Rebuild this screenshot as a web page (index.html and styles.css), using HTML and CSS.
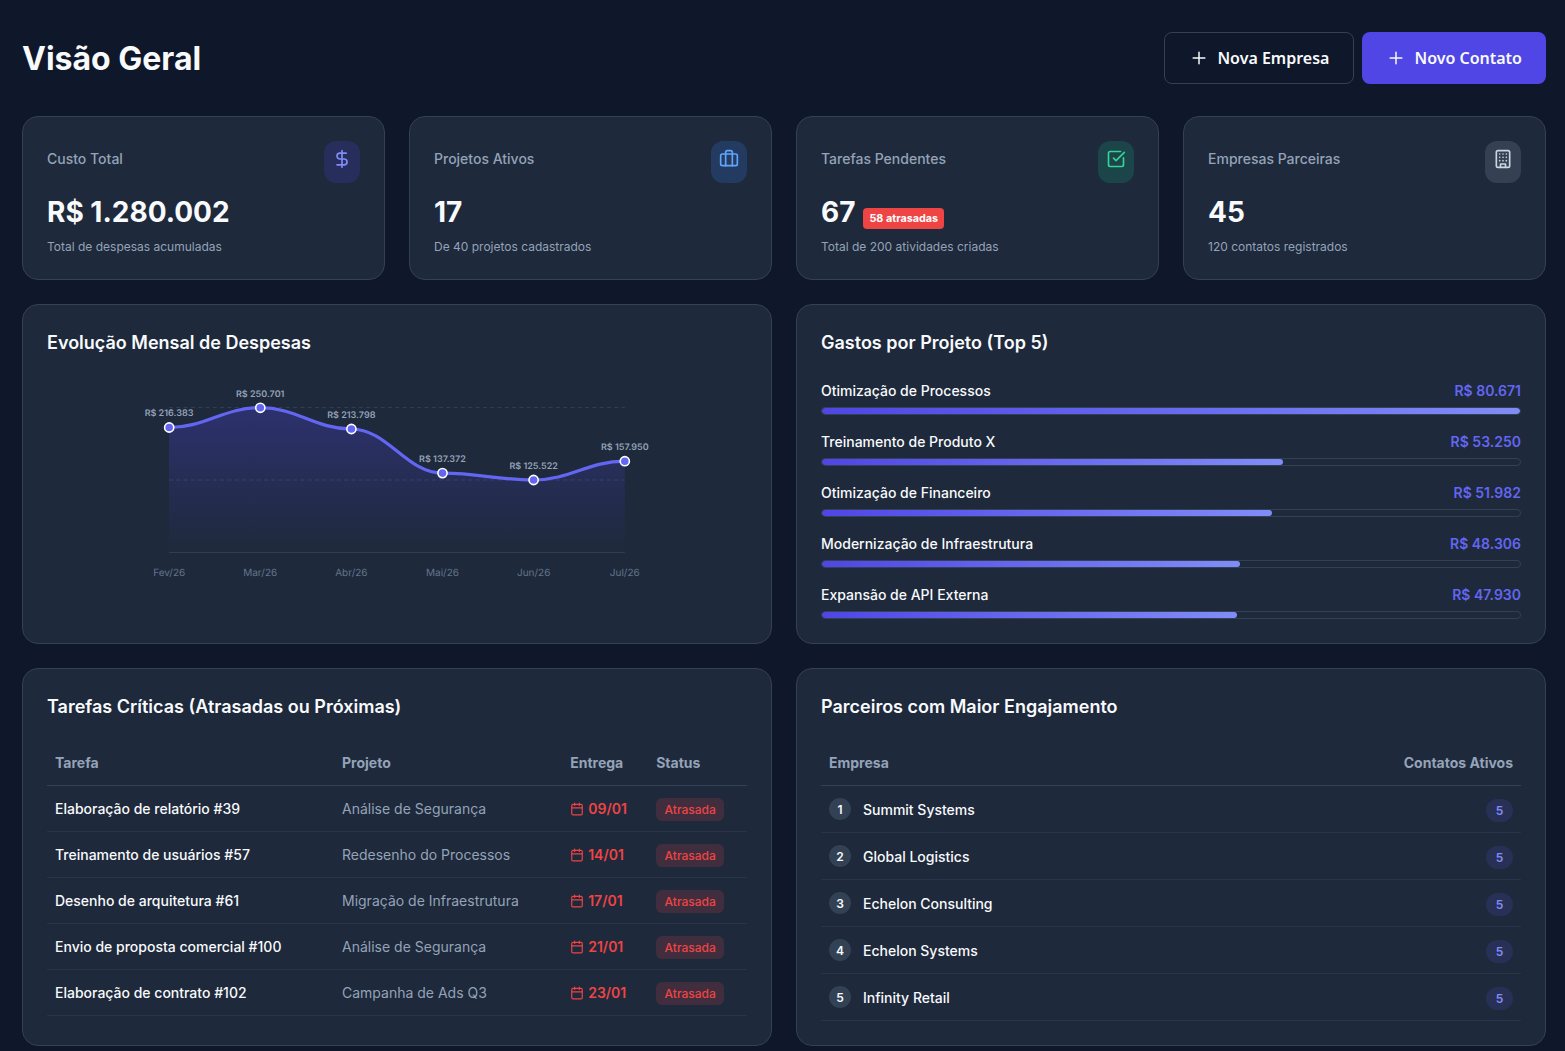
FILE: index.html
```html
<!DOCTYPE html>
<html lang="pt-BR">
<head>
<meta charset="utf-8">
<title>Visão Geral</title>
<link rel="stylesheet" href="styles.css">
</head>
<body>
<svg class="sprite" width="0" height="0">
  <symbol id="plus" viewBox="0 0 24 24"><path d="M5 12h14M12 5v14"/></symbol>
  <symbol id="calendar" viewBox="0 0 24 24"><path d="M8 2v4M16 2v4M3 10h18"/><rect x="3" y="4" width="18" height="18" rx="2"/></symbol>
</svg>
<main class="page">
  <header class="header">
    <h1>Visão Geral</h1>
    <div class="actions">
      <button class="btn btn-outline"><svg class="icon"><use href="#plus"/></svg>Nova Empresa</button>
      <button class="btn btn-primary"><svg class="icon"><use href="#plus"/></svg>Novo Contato</button>
    </div>
  </header>

  <section class="stats">
    <article class="card stat">
      <div class="stat-head"><span class="stat-label">Custo Total</span>
        <span class="stat-icon indigo"><svg class="icon" viewBox="0 0 24 24"><path d="M12 2v20M17 5H9.5a3.5 3.5 0 0 0 0 7h5a3.5 3.5 0 0 1 0 7H6"/></svg></span></div>
      <div class="stat-value">R$ 1.280.002</div>
      <p class="stat-note">Total de despesas acumuladas</p>
    </article>
    <article class="card stat">
      <div class="stat-head"><span class="stat-label">Projetos Ativos</span>
        <span class="stat-icon blue"><svg class="icon" viewBox="0 0 24 24"><path d="M16 20V4a2 2 0 0 0-2-2h-4a2 2 0 0 0-2 2v16"/><rect x="2" y="6" width="20" height="14" rx="2"/></svg></span></div>
      <div class="stat-value">17</div>
      <p class="stat-note">De 40 projetos cadastrados</p>
    </article>
    <article class="card stat">
      <div class="stat-head"><span class="stat-label">Tarefas Pendentes</span>
        <span class="stat-icon green"><svg class="icon" viewBox="0 0 24 24"><path d="M21 10.5V19a2 2 0 0 1-2 2H5a2 2 0 0 1-2-2V5a2 2 0 0 1 2-2h12.5"/><path d="m9 11 3 3L22 4"/></svg></span></div>
      <div class="stat-value">67<span class="late">58 atrasadas</span></div>
      <p class="stat-note">Total de 200 atividades criadas</p>
    </article>
    <article class="card stat">
      <div class="stat-head"><span class="stat-label">Empresas Parceiras</span>
        <span class="stat-icon slate"><svg class="icon" viewBox="0 0 24 24"><rect x="4" y="2" width="16" height="20" rx="2"/><path d="M9 22v-4h6v4M8 6h.01M16 6h.01M12 6h.01M12 10h.01M12 14h.01M16 10h.01M16 14h.01M8 10h.01M8 14h.01"/></svg></span></div>
      <div class="stat-value">45</div>
      <p class="stat-note">120 contatos registrados</p>
    </article>
  </section>

  <section class="panels">
    <article class="card panel">
      <h2>Evolução Mensal de Despesas</h2>
      <svg class="chart" viewBox="0 0 700 239">
        <defs><linearGradient id="area" x1="0" y1="0" x2="0" y2="1"><stop offset="0" stop-color="#4f46e5" stop-opacity=".3"/><stop offset="1" stop-color="#4f46e5" stop-opacity="0"/></linearGradient></defs>
        <path class="grid-line dashed" d="M122 27.6H577.8M122 100H577.8"/>
        <path class="grid-line" d="M122 172.4H577.8"/>
        <path fill="url(#area)" d="M122 47.5C158.5 47.5 176.7 27.6 213.2 27.6S267.8 49 304.3 49S359 93.1 395.5 93.1S450.2 100 486.7 100S541.3 81.2 577.8 81.2V172.4H122Z"/>
        <path class="line" d="M122 47.5C158.5 47.5 176.7 27.6 213.2 27.6S267.8 49 304.3 49S359 93.1 395.5 93.1S450.2 100 486.7 100S541.3 81.2 577.8 81.2"/>
        <g class="dots"><circle cx="122.2" cy="47.5" r="4.6"/><circle cx="213.3" cy="27.8" r="4.6"/><circle cx="304.4" cy="49" r="4.6"/><circle cx="395.5" cy="93.1" r="4.6"/><circle cx="486.6" cy="100" r="4.6"/><circle cx="577.8" cy="81.2" r="4.6"/></g>
        <g class="values"><text x="122" y="36">R$ 216.383</text><text x="213.2" y="16.8">R$ 250.701</text><text x="304.3" y="38">R$ 213.798</text><text x="395.5" y="82">R$ 137.372</text><text x="486.7" y="89">R$ 125.522</text><text x="577.8" y="70">R$ 157.950</text></g>
        <g class="months"><text x="122.2" y="196">Fev/26</text><text x="213.2" y="196">Mar/26</text><text x="304.4" y="196">Abr/26</text><text x="395.5" y="196">Mai/26</text><text x="486.7" y="196">Jun/26</text><text x="577.8" y="196">Jul/26</text></g>
      </svg>
    </article>
    <article class="card panel">
      <h2>Gastos por Projeto (Top 5)</h2>
      <div class="bars">
        <div class="bar-item"><div class="bar-text"><span>Otimização de Processos</span><strong>R$ 80.671</strong></div><div class="track"><div class="fill" style="width:100%"></div></div></div>
        <div class="bar-item"><div class="bar-text"><span>Treinamento de Produto X</span><strong>R$ 53.250</strong></div><div class="track"><div class="fill" style="width:66.01%"></div></div></div>
        <div class="bar-item"><div class="bar-text"><span>Otimização de Financeiro</span><strong>R$ 51.982</strong></div><div class="track"><div class="fill" style="width:64.44%"></div></div></div>
        <div class="bar-item"><div class="bar-text"><span>Modernização de Infraestrutura</span><strong>R$ 48.306</strong></div><div class="track"><div class="fill" style="width:59.88%"></div></div></div>
        <div class="bar-item"><div class="bar-text"><span>Expansão de API Externa</span><strong>R$ 47.930</strong></div><div class="track"><div class="fill" style="width:59.41%"></div></div></div>
      </div>
    </article>
    <article class="card panel">
      <h2>Tarefas Críticas (Atrasadas ou Próximas)</h2>
      <table class="tasks">
        <colgroup><col class="c-task"><col class="c-project"><col class="c-date"><col></colgroup>
        <thead><tr><th>Tarefa</th><th>Projeto</th><th>Entrega</th><th>Status</th></tr></thead>
        <tbody>
          <tr><td>Elaboração de relatório #39</td><td class="muted">Análise de Segurança</td><td><span class="date"><svg class="icon"><use href="#calendar"/></svg>09/01</span></td><td><span class="tag">Atrasada</span></td></tr>
          <tr><td>Treinamento de usuários #57</td><td class="muted">Redesenho do Processos</td><td><span class="date"><svg class="icon"><use href="#calendar"/></svg>14/01</span></td><td><span class="tag">Atrasada</span></td></tr>
          <tr><td>Desenho de arquitetura #61</td><td class="muted">Migração de Infraestrutura</td><td><span class="date"><svg class="icon"><use href="#calendar"/></svg>17/01</span></td><td><span class="tag">Atrasada</span></td></tr>
          <tr><td>Envio de proposta comercial #100</td><td class="muted">Análise de Segurança</td><td><span class="date"><svg class="icon"><use href="#calendar"/></svg>21/01</span></td><td><span class="tag">Atrasada</span></td></tr>
          <tr><td>Elaboração de contrato #102</td><td class="muted">Campanha de Ads Q3</td><td><span class="date"><svg class="icon"><use href="#calendar"/></svg>23/01</span></td><td><span class="tag">Atrasada</span></td></tr>
        </tbody>
      </table>
    </article>
    <article class="card panel">
      <h2>Parceiros com Maior Engajamento</h2>
      <table class="partners">
        <thead><tr><th>Empresa</th><th class="right">Contatos Ativos</th></tr></thead>
        <tbody>
          <tr><td><div class="company"><span class="rank">1</span><span class="name">Summit Systems</span></div></td><td class="right"><span class="count">5</span></td></tr>
          <tr><td><div class="company"><span class="rank">2</span><span class="name">Global Logistics</span></div></td><td class="right"><span class="count">5</span></td></tr>
          <tr><td><div class="company"><span class="rank">3</span><span class="name">Echelon Consulting</span></div></td><td class="right"><span class="count">5</span></td></tr>
          <tr><td><div class="company"><span class="rank">4</span><span class="name">Echelon Systems</span></div></td><td class="right"><span class="count">5</span></td></tr>
          <tr><td><div class="company"><span class="rank">5</span><span class="name">Infinity Retail</span></div></td><td class="right"><span class="count">5</span></td></tr>
        </tbody>
      </table>
    </article>
  </section>
</main>
</body>
</html>
```
FILE: styles.css
```css
* { box-sizing: border-box; }
body { margin: 0; background: #0f172a; color: #f8fafc; font-family: Inter, sans-serif; font-size: 14px; line-height: 21px; overflow: hidden; }
h1, h2, p { margin: 0; }
.sprite { position: absolute; }
.page { padding: 32px 19px 5px 22px; }
.icon { width: 20px; height: 20px; fill: none; stroke: currentColor; stroke-width: 2; stroke-linecap: round; stroke-linejoin: round; flex: none; }

.header { display: flex; justify-content: space-between; align-items: center; height: 52px; margin-bottom: 32px; }
h1 { font-size: 32px; line-height: 48px; font-weight: 700; padding-top: 2px; }
.actions { display: flex; gap: 8px; }
.btn { display: flex; align-items: center; gap: 8px; height: 52px; padding: 0 24px; border: 1px solid #334155; border-radius: 8px; background: transparent; color: #f8fafc; font: 600 16px/24px "Noto Sans", sans-serif; }
.btn .icon { stroke-width: 1.8; }
.btn-primary { background: #4f46e5; border: 0; }

.card { background: #1e293b; border: 1px solid #334155; border-radius: 16px; padding: 24px; }
.stats { display: grid; grid-template-columns: repeat(4, 1fr); gap: 24px; margin-bottom: 24px; }
.stat { height: 164px; }
.stat-head { display: flex; justify-content: space-between; align-items: flex-start; height: 42px; }
.stat-label { color: #94a3b8; font-weight: 500; padding-top: 7px; }
.stat-icon { width: 36px; height: 42px; padding: 8px; border-radius: 12px; }
.stat-icon .icon { display: block; }
.indigo { background: #272e5c; color: #818cf8; }
.blue { background: #243b61; color: #60a5fa; }
.green { background: #1b4549; color: #34d399; }
.slate { background: #354152; color: #cbd5e1; }
.stat-value { font-size: 28px; font-weight: 700; line-height: 42px; margin-top: 8px; height: 42px; }
.late { display: inline-block; margin-left: 8px; padding: 2px 6px; border-radius: 4px; background: #ef4444; color: #fff; font-size: 10.8px; line-height: 17px; font-weight: 700; }
.stat-note { color: #94a3b8; font-size: 12px; line-height: 18px; margin-top: 5px; }

.panels { display: grid; grid-template-columns: repeat(2, 1fr); grid-template-rows: 340px 378px; gap: 24px; }
h2 { font-size: 18px; line-height: 27px; font-weight: 600; margin-bottom: 24px; }
.chart { display: block; width: 700px; height: 239px; }
.grid-line { stroke: #334155; fill: none; stroke-width: 1; }
.dashed { stroke-dasharray: 4 3.3; }
.line { fill: none; stroke: #6366f1; stroke-width: 3.2; stroke-linecap: round; }
.dots { fill: #6366f1; stroke: #fff; stroke-width: 1.6; }
.values { fill: #94a3b8; font-size: 9px; font-weight: 600; text-anchor: middle; text-rendering: geometricPrecision; }
.months { fill: #64748b; font-size: 10px; text-anchor: middle; text-rendering: geometricPrecision; }

.bars { display: grid; gap: 16px; }
.bar-item { display: grid; gap: 6px; }
.bar-text { display: flex; justify-content: space-between; font-weight: 500; }
.bar-text strong { color: #6366f1; font-weight: 600; }
.track { height: 8px; border: 1px solid #334155; border-radius: 4px; overflow: hidden; }
.fill { height: 100%; border-radius: 4px; background: linear-gradient(90deg, #4f46e5, #818cf8); }

table { width: 100%; border-collapse: separate; border-spacing: 0; table-layout: fixed; }
th, td { text-align: left; padding: 0 8px; vertical-align: middle; }
th { height: 42px; padding-bottom: 4px; color: #94a3b8; font-weight: 700; border-bottom: 1px solid #334155; }
td { height: 46px; font-weight: 500; border-bottom: 1px solid #283548; }
.c-task { width: 287px; }
.c-project { width: 228.2px; }
.c-date { width: 86px; }
.muted { color: #94a3b8; font-weight: 400; }
.date { display: flex; align-items: center; gap: 4px; color: #ef4444; font-weight: 600; }
.date .icon { width: 14px; height: 14px; }
.tag { display: block; width: 68px; height: 23px; border-radius: 6px; background: #402e3e; color: #ef4444; font-size: 12px; line-height: 23px; font-weight: 500; text-align: center; margin-top: 1px; }
.right { text-align: right; }
.partners td { height: 47px; }
.company { display: flex; align-items: center; gap: 12px; }
.rank { width: 22px; height: 22px; border-radius: 50%; background: #334155; font-size: 12px; line-height: 23px; font-weight: 600; text-align: center; }
.name { padding-top: 1px; }
.count { display: inline-block; width: 27px; height: 23px; border-radius: 12px; background: #293056; color: #818cf8; font-size: 12px; line-height: 23px; font-weight: 600; text-align: center; vertical-align: middle; margin-top: 3px; }
```
